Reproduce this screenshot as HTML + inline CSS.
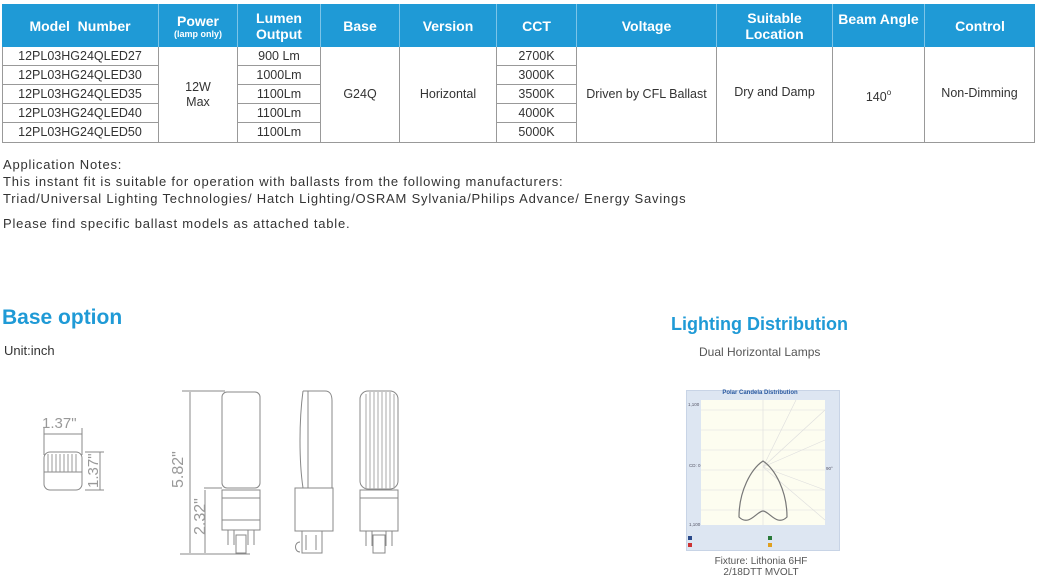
<!DOCTYPE html>
<html><head><meta charset="utf-8"><style>
*{margin:0;padding:0;box-sizing:border-box}
body{width:1040px;height:588px;background:#fff;position:relative;overflow:hidden;font-family:"Liberation Sans",sans-serif;color:#333}
.a{position:absolute}
.h{position:absolute;top:4px;height:43px;background:#1f9ad6;color:#fff;font-weight:bold;font-size:14px;display:flex;align-items:center;justify-content:center;text-align:center;line-height:16px;border-right:1px solid #7cc4e8}
.c{position:absolute;border-right:1px solid #999;border-bottom:1px solid #999;font-size:12.5px;display:flex;align-items:center;justify-content:center;text-align:center;line-height:15px;color:#333}
.n{font-size:13px;line-height:17px;color:#333;letter-spacing:.8px;white-space:nowrap}
</style></head><body>
<div class="h" style="left:2px;width:157px">Model&nbsp; Number</div>
<div class="h" style="left:159px;width:79px;flex-direction:column">Power<span style="font-size:9px;line-height:10px">(lamp only)</span></div>
<div class="h" style="left:238px;width:83px">Lumen<br>Output</div>
<div class="h" style="left:321px;width:79px">Base</div>
<div class="h" style="left:400px;width:97px">Version</div>
<div class="h" style="left:497px;width:80px">CCT</div>
<div class="h" style="left:577px;width:140px">Voltage</div>
<div class="h" style="left:717px;width:116px">Suitable<br>Location</div>
<div class="h" style="left:833px;width:92px;align-items:flex-start;padding-top:7px">Beam Angle</div>
<div class="h" style="left:925px;width:110px;border-right:none">Control</div>
<div class="a" style="left:2px;top:47px;width:1px;height:96px;background:#999"></div>
<div class="c" style="left:2px;top:47px;width:157px;height:19px">12PL03HG24QLED27</div>
<div class="c" style="left:2px;top:66px;width:157px;height:19px">12PL03HG24QLED30</div>
<div class="c" style="left:2px;top:85px;width:157px;height:19px">12PL03HG24QLED35</div>
<div class="c" style="left:2px;top:104px;width:157px;height:19px">12PL03HG24QLED40</div>
<div class="c" style="left:2px;top:123px;width:157px;height:20px">12PL03HG24QLED50</div>
<div class="c" style="left:159px;top:47px;width:79px;height:96px">12W<br>Max</div>
<div class="c" style="left:238px;top:47px;width:83px;height:19px">900 Lm</div>
<div class="c" style="left:238px;top:66px;width:83px;height:19px">1000Lm</div>
<div class="c" style="left:238px;top:85px;width:83px;height:19px">1100Lm</div>
<div class="c" style="left:238px;top:104px;width:83px;height:19px">1100Lm</div>
<div class="c" style="left:238px;top:123px;width:83px;height:20px">1100Lm</div>
<div class="c" style="left:321px;top:47px;width:79px;height:96px">G24Q</div>
<div class="c" style="left:400px;top:47px;width:97px;height:96px">Horizontal</div>
<div class="c" style="left:497px;top:47px;width:80px;height:19px">2700K</div>
<div class="c" style="left:497px;top:66px;width:80px;height:19px">3000K</div>
<div class="c" style="left:497px;top:85px;width:80px;height:19px">3500K</div>
<div class="c" style="left:497px;top:104px;width:80px;height:19px">4000K</div>
<div class="c" style="left:497px;top:123px;width:80px;height:20px">5000K</div>
<div class="c" style="left:577px;top:47px;width:140px;height:96px">Driven by CFL Ballast</div>
<div class="c" style="left:717px;top:47px;width:116px;height:96px;padding-bottom:4px">Dry and Damp</div>
<div class="c" style="left:833px;top:47px;width:92px;height:96px"><span>140<span style="font-size:8px;vertical-align:6px">o</span></span></div>
<div class="c" style="left:925px;top:47px;width:110px;height:96px;padding-bottom:3px">Non-Dimming</div>

<div class="a n" style="left:3px;top:156px">Application Notes:<br>This instant fit is suitable for operation with ballasts from the following manufacturers:<br>Triad/Universal Lighting Technologies/ Hatch Lighting/OSRAM Sylvania/Philips Advance/ Energy Savings</div>
<div class="a n" style="left:3px;top:215px">Please find specific ballast models as attached table.</div>
<div class="a" style="left:2px;top:306px;font-size:21px;font-weight:bold;color:#1f9ad6">Base option</div>
<div class="a" style="left:4px;top:343px;font-size:13px;color:#333">Unit:inch</div>
<div class="a" style="left:671px;top:314px;font-size:18px;font-weight:bold;color:#1f9ad6">Lighting Distribution</div>
<div class="a" style="left:699px;top:345px;font-size:12px;color:#555">Dual Horizontal Lamps</div>

<svg class="a" style="left:0;top:370px" width="420" height="218" viewBox="0 0 420 218" fill="none" stroke="#888" stroke-width="1">
<text x="42" y="58" font-size="15" fill="#999" stroke="none" font-family="Liberation Sans">1.37"</text>
<line x1="44" y1="64" x2="82" y2="64"/><line x1="44" y1="58" x2="44" y2="85"/><line x1="82" y1="58" x2="82" y2="85"/>
<rect x="44" y="82" width="38" height="38" rx="6"/><line x1="44" y1="102" x2="82" y2="102"/>
<g stroke="#999"><path d="M48 84v18M52 84v18M56 84v18M60 84v18M64 84v18M68 84v18M72 84v18M76 84v18"/></g>
<line x1="85" y1="82" x2="104" y2="82"/><line x1="100" y1="82" x2="100" y2="120"/><line x1="85" y1="120" x2="104" y2="120"/>
<text transform="translate(98,118) rotate(-90)" font-size="15" fill="#999" stroke="none" font-family="Liberation Sans">1.37"</text>
<line x1="182" y1="21" x2="225" y2="21"/><line x1="190" y1="22" x2="190" y2="183"/><line x1="180" y1="184" x2="250" y2="184"/>
<line x1="204" y1="118" x2="222" y2="118"/><line x1="205" y1="120" x2="205" y2="183"/>
<text transform="translate(183,118) rotate(-90)" font-size="16" fill="#999" stroke="none" font-family="Liberation Sans">5.82"</text>
<text transform="translate(205,165) rotate(-90)" font-size="16" fill="#999" stroke="none" font-family="Liberation Sans">2.32"</text>
<rect x="222" y="22" width="38" height="96" rx="5"/>
<rect x="222" y="120" width="38" height="40"/><line x1="222" y1="128" x2="260" y2="128"/><line x1="222" y1="150" x2="260" y2="150"/>
<path d="M228 160v15M234 160v15M248 160v15M254 160v15M236 165h10v18h-10z"/>
<path d="M303 21c-4 30-4 70 0 97M303 21h22c6 0 7 5 7 10v87M308 21v97h15"/>
<rect x="295" y="118" width="38" height="43"/><path d="M302 161v22h20v-22M306 165v15M316 165v15M300 172c-6 0-6 10 0 10"/>
<rect x="360" y="21" width="38" height="98" rx="8"/>
<g stroke="#aaa"><path d="M366 24v95M370 22v97M374 22v97M378 22v97M382 22v97M386 22v97M390 22v97M394 24v95"/></g>
<rect x="360" y="120" width="38" height="41"/><line x1="360" y1="128" x2="398" y2="128"/>
<path d="M366 161v15M372 161v15M386 161v15M392 161v15M373 165h12v18h-12z"/>
</svg>

<div class="a" style="left:686px;top:390px;width:154px;height:161px;background:#dde6f2;border:1px solid #c8d4e6"></div>
<div class="a" style="left:701px;top:400px;width:124px;height:125px;background:#fdfdf0"></div>
<div class="a" style="left:700px;top:390px;font-size:6px;color:#2a5aa0;font-weight:bold;width:120px;text-align:center">Polar Candela Distribution</div>
<svg class="a" style="left:686px;top:390px" width="154" height="161" viewBox="0 0 154 161" fill="none">
<g stroke="#ddd" stroke-width=".6"><path d="M15 20h124M15 40h124M15 60h124M15 80h124M15 100h124M15 120h124M77 10v125"/>
<path d="M77 77L139 20M77 77L139 50M77 77L139 100M77 77L139 130M77 77L110 10"/></g>
<path d="M77 71c-12 8-24 30-24 56c10 10 18-6 24-6c6 0 14 16 24 6c0-26-12-48-24-56z" stroke="#777" stroke-width="1.2"/>
<g font-size="4.5" fill="#556" font-family="Liberation Sans"><text x="2" y="16">1,100</text><text x="3" y="77">CD: 0</text><text x="3" y="136">1,100</text><text x="140" y="80">90°</text></g>
<rect x="2" y="146" width="4" height="4" fill="#2a4a8a"/><rect x="2" y="153" width="4" height="4" fill="#c33"/>
<rect x="82" y="146" width="4" height="4" fill="#2a7a3a"/><rect x="82" y="153" width="4" height="4" fill="#e0a020"/>
</svg>
<div class="a" style="left:686px;top:556px;width:150px;text-align:center;font-size:10px;line-height:11px;color:#555">Fixture: Lithonia 6HF<br>2/18DTT MVOLT</div>
</body></html>
